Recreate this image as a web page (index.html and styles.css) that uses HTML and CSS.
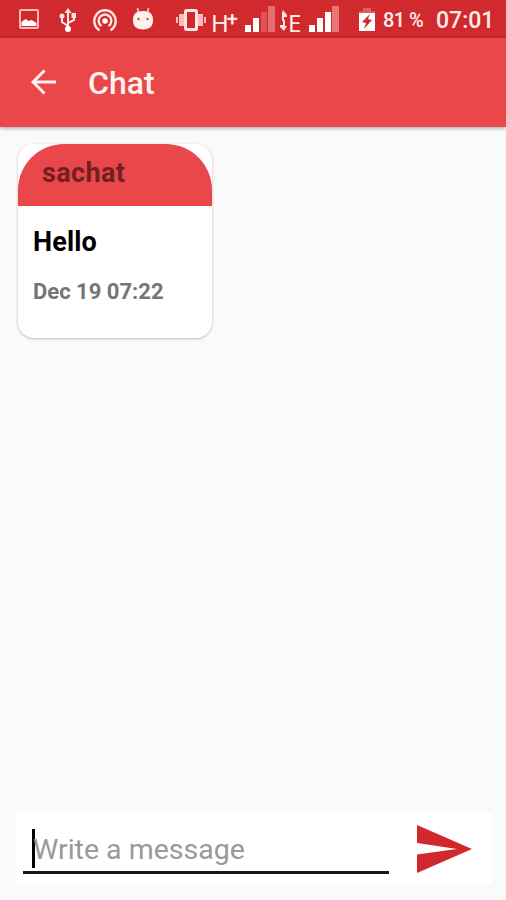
FILE: index.html
```html
<!DOCTYPE html>
<html lang="en">
<head>
<meta charset="utf-8">
<title>Chat</title>
<link rel="stylesheet" href="styles.css">
</head>
<body>
<div class="screen">
  <header class="status">
    <svg class="picture" width="20" height="20" viewBox="0 0 20 20"><rect x="1" y="1" width="18" height="18" rx="1" fill="none" stroke="#ffb9b6" stroke-width="2"/><path d="M2.500 17v-4l4-3 3 2 3-1 5 3v3z" fill="#fff"/></svg>
    <svg class="usb" width="18" height="24" viewBox="0 0 18 24" fill="none" stroke="#ffe8e6" stroke-width="2"><path d="M9 3v17M9 18l-6-4V8M9 15l6-3V7"/><path d="M9 0l3.500 5h-7z" fill="#ffe8e6" stroke="none"/><circle cx="9" cy="21" r="3" fill="#fff" stroke="none"/><circle cx="3" cy="8" r="2.500" fill="#ffe8e6" stroke="none"/><path d="M12.500 5H17v5h-4.500z" fill="#ffe8e6" stroke="none"/></svg>
    <svg class="hotspot" width="24" height="23" viewBox="0 0 24 23" fill="none" stroke="#ffe4e2" stroke-width="2.400"><path d="M6.500 21.200a10.700 10.700 0 1 1 11 0M8.500 17a6.300 6.300 0 1 1 7 0"/><circle cx="12" cy="12" r="2.800" fill="#fff" stroke="none"/></svg>
    <svg class="android" width="20" height="23" viewBox="0 0 20 23"><path d="M4.500 1l1 5M15.500 1l-1 5" stroke="#ffc4c0" stroke-width="1.600"/><path d="M0 13C0 7 3 4 10 4s10 3 10 9-3 9.500-10 9.500S0 19 0 13z" fill="#fff0ee"/><circle cx="5.500" cy="12" r="1.200" fill="#c84c4f"/><circle cx="14.500" cy="12" r="1.200" fill="#c84c4f"/></svg>
    <svg class="vibrate" width="30" height="24" viewBox="0 0 30 24"><path d="M0 9h2v6H0zM28 9h2v6h-2zM3 6h6v12H3zM21 6h6v12h-6z" fill="#ffb9b6"/><rect x="9.500" y="2.500" width="11" height="19" rx="1" fill="none" stroke="#ffe6e3" stroke-width="3"/></svg>
    <span class="network hplus">H<sup>+</sup></span>
    <svg class="signal first" width="30" height="26" viewBox="0 0 30 26"><path d="M0 19h6v7H0zM8 12h6v14H8z" fill="#fff"/><path d="M16 6h6v20h-6z" fill="#de5356"/><path d="M23 0h7v26h-7z" fill="#e56c6f"/></svg>
    <svg class="data" width="8" height="21" viewBox="0 0 8 21" fill="#ffe4e2"><path d="M3 0l4 5v2H4v4H2V3zM3 10h2v6h2l-3 5-4-4v-2h3z"/></svg>
    <span class="network edge">E</span>
    <svg class="signal second" width="30" height="26" viewBox="0 0 30 26"><path d="M0 19h6v7H0zM8 12h6v14H8zM16 6h6v20h-6z" fill="#fff"/><path d="M23 0h7v26h-7z" fill="#e77679"/></svg>
    <svg class="battery" width="16" height="23" viewBox="0 0 16 23"><path d="M4 0h8v3h4v3H0V3h4z" fill="#e05d60"/><path d="M0 5h16v18H0z" fill="#fff"/><path d="M11 6l-8 8 4 1-2 6 8-9-4-1z" fill="#ce2c30"/></svg>
    <span class="percent">81 %</span>
    <time class="clock">07:01</time>
  </header>
  <nav class="appbar">
    <svg class="back" width="26" height="26" viewBox="0 0 26 26" fill="none" stroke="#fff1ef" stroke-width="2.900"><path d="M25 13H2M13.500 1.500L2 13l11.500 11.500"/></svg>
    <h1>Chat</h1>
  </nav>
  <main>
    <article class="card">
      <h2>sachat</h2>
      <p class="message">Hello</p>
      <time class="date">Dec 19 07:22</time>
    </article>
  </main>
  <footer class="composer">
    <div class="field"><span class="caret"></span><span class="hint">Write a message</span></div>
    <svg class="send" width="55" height="48" viewBox="0 0 55 48"><path d="M0 0l55 24L0 48V29.500L40 24 0 18z" fill="#d1282c"/></svg>
  </footer>
</div>
</body>
</html>
```
FILE: styles.css
```css
* { box-sizing: border-box; }
body { margin: 0; font-family: Roboto, sans-serif; background: #fafafa; }
h1, h2, p { margin: 0; }
svg { display: block; flex: none; }
.screen { width: 506px; height: 900px; display: flex; flex-direction: column; overflow: hidden; }
.status { height: 38px; flex: none; display: flex; align-items: flex-start; background: #d02a2e; color: #ffecea; white-space: nowrap; }
.picture { margin: 9px 0 0 19px; }
.usb { margin: 8px 0 0 20px; }
.hotspot { margin: 9px 0 0 16px; }
.android { margin: 7px 0 0 16px; }
.vibrate { margin: 8px 0 0 23px; }
.network { flex: none; font-family: "Noto Sans", sans-serif; font-size: 24px; line-height: 26px; }
.hplus { display: flex; width: 25px; margin: 10px 0 0 5px; letter-spacing: -1px; }
.hplus sup { font-family: Roboto, sans-serif; font-size: 20px; font-weight: 500; line-height: 19px; margin-left: -1px; }
.signal { margin-top: 6px; }
.first { margin-left: 9px; }
.data { margin: 10px 0 0 5px; }
.edge { width: 14px; margin: 10px 0 0 0; }
.second { margin-left: 7px; }
.battery { margin: 8px 0 0 20px; }
.percent { width: 43px; margin: 8px 0 0 8px; font-size: 20px; line-height: 24px; letter-spacing: -.6px; font-weight: 500; }
.clock { margin: 6px 0 0 10px; font-size: 23px; font-weight: 500; line-height: 29px; }
.appbar { position: relative; height: 89px; flex: none; display: flex; align-items: center; padding-left: 31px; background: #e9474a; color: #fff3f0; box-shadow: 0 1px 4px rgba(0, 20, 20, .4); }
.back { margin-top: -2px; }
h1 { margin: 1px 0 0 31px; font-size: 32px; line-height: 40px; font-weight: 500; }
main { flex: 1; padding: 17px 18px; }
.card { width: 194px; height: 194px; overflow: hidden; border-radius: 16px; background: #fff; box-shadow: 0 1px 3px rgba(0, 0, 0, .25); }
.card h2 { height: 62px; padding: 12px 0 0 24px; border-radius: 46px 46px 0 0; background: #e9474a; color: #731f22; font-size: 27px; line-height: 34px; font-weight: 700; letter-spacing: .35px; }
.message { margin: 19px 0 0 15px; color: #000; font-size: 27px; line-height: 34px; font-weight: 700; letter-spacing: .15px; }
.date { display: block; margin: 19px 0 0 15px; color: #757575; font-size: 22px; line-height: 28px; font-weight: 700; }
.composer { display: flex; flex: none; height: 71px; margin: 0 14px 16px 16px; padding-left: 7px; background: #fff; }
.field { display: flex; width: 366px; height: 61px; padding-left: 9px; border-bottom: 3px solid #151819; }
.caret { width: 3px; height: 39px; margin-top: 16px; background: #000; }
.hint { margin: 20px 0 0 -2px; font-size: 28.5px; line-height: 34px; color: #999; white-space: nowrap; }
.send { margin: 12px 0 0 28px; }
```
